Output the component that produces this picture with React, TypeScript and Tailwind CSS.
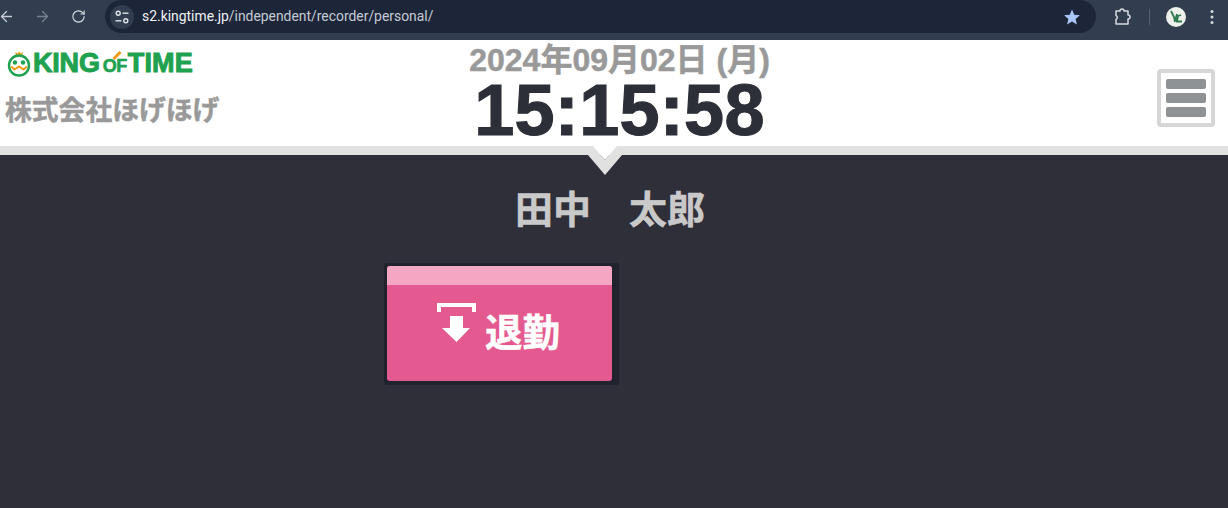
import React from "react";
import { ArrowLeft, ArrowRight, RotateCw } from "lucide-react";

const jp = "font-['Liberation_Sans','Noto_Sans_CJK_JP',sans-serif]";

function Tune() {
  return (
    <svg width="16" height="16" viewBox="0 0 16 16" fill="none" stroke="#dfe3ea" strokeWidth="1.4">
      <circle cx="4.2" cy="4.2" r="2" />
      <path d="M8.5 4.2h6" />
      <path d="M1.5 11.8h6" />
      <circle cx="11.8" cy="11.8" r="2" />
    </svg>
  );
}

function Logo() {
  return (
    <div className="flex items-center h-[27px]">
      <svg width="26" height="26" viewBox="0 0 25 26" className="shrink-0 ml-[1px]">
        <path d="M9 5 V1 L11 2.6 L12.5 .5 L14 2.6 L16 1 V5 Z" fill="#f09a1c" />
        <circle cx="12.5" cy="14.5" r="10" fill="#fff" stroke="#1fa24f" strokeWidth="2.4" />
        <circle cx="8.5" cy="11.5" r="2.2" fill="#1fa24f" />
        <circle cx="16.5" cy="11.5" r="2.2" fill="#1fa24f" />
        <path d="M4.5 15.5 L8 18.500 L12.5 15.500 L17 18.500 L20.500 15.500" fill="none" stroke="#f09a1c" strokeWidth="2" />
      </svg>
      <span className="ml-[1px] font-['Liberation_Sans',sans-serif] font-bold text-[27px] leading-none text-[#1fa24f] [-webkit-text-stroke:1px_#1fa24f] tracking-[-0.2px]">KING</span>
      <span className="ml-[3px] relative font-['Liberation_Sans',sans-serif] font-bold text-[18px] leading-none text-[#1fa24f] [-webkit-text-stroke:0.6px_#1fa24f] mt-[4px] tracking-[-0.5px]">
        <span>OF</span>
        <span className="absolute left-[9px] -top-[3px] h-[3px] w-[10px] bg-[#f09a1c] -rotate-45" />
      </span>
      <span className="ml-[1px] font-['Liberation_Sans',sans-serif] font-bold text-[27px] leading-none text-[#1fa24f] [-webkit-text-stroke:1px_#1fa24f] tracking-[0.2px]">TIME</span>
    </div>
  );
}

export default function App() {
  return (
    <div className="w-[1228px] h-[508px] overflow-hidden flex flex-col bg-[#2f2f39]">
      <div className="h-[40px] shrink-0 bg-[#323e4f] flex items-start text-[#dfe3ea]">
        <div className="h-[33px] w-[105px] shrink-0 flex items-center">
          <ArrowLeft size={17} strokeWidth={1.8} className="-ml-[2px] text-[#c8ced8]" />
          <ArrowRight size={17} strokeWidth={1.8} className="ml-[19px] text-[#77818f]" />
          <RotateCw size={15} strokeWidth={1.8} className="ml-[20px] text-[#d5dae2]" />
        </div>
        <div className="h-[33px] w-[991px] shrink-0 bg-[#1d2638] rounded-full flex items-center pl-[5px] pr-[15px]">
          <div className="w-[24px] h-[24px] rounded-full bg-[#323e4f] flex items-center justify-center">
            <Tune />
          </div>
          <div className="ml-[8px] font-['Roboto',sans-serif] text-[13.9px] leading-none text-[#c3cad5] flex-1">
            <span className="text-[#eef1f5]">s2.kingtime.jp</span>/independent/recorder/personal/
          </div>
          <svg width="18" height="18" viewBox="0 0 24 24" fill="#a8c7fa">
            <path d="M12 2 l3 7 7.500 .6 -5.700 4.900 1.800 7.400 -6.600 -4 -6.600 4 1.800 -7.400 -5.700 -4.900 7.500 -.6z" />
          </svg>
        </div>
        <div className="h-[33px] flex-1 flex items-center">
          <svg width="18" height="18" viewBox="0 0 18 18" fill="none" stroke="#d5dae2" strokeWidth="1.5" className="ml-[17px]">
            <path d="M3 3 H7 A2 2 0 0 1 11 3 H15 V7 A2 2 0 0 1 15 11 V16 H3 V11.500 A2.200 2.200 0 0 0 3 7.500 Z" strokeLinejoin="round" />
          </svg>
          <div className="ml-[18px] w-[1px] h-[16px] bg-[#56606f]" />
          <div className="ml-[16px] w-[20px] h-[20px] rounded-full bg-[#eef0ec] flex items-center justify-center">
            <svg width="15" height="15" viewBox="0 0 15 15" fill="none" stroke="#2f7a4f" strokeWidth="1.8">
              <path d="M2 2l3 6 1 5M6 12l2-7M8 12l1-5 3-1M7 12.500h6" />
            </svg>
          </div>
          <svg width="4" height="16" viewBox="0 0 4 16" fill="#d5dae2" className="ml-[24px]">
            <circle cx="2" cy="2.500" r="1.500" />
            <circle cx="2" cy="8" r="1.500" />
            <circle cx="2" cy="13.500" r="1.500" />
          </svg>
        </div>
      </div>

      <div className="h-[115px] shrink-0 bg-white border-b-[9px] border-[#e1e1e1] flex relative">
        <div className="w-[330px] shrink-0 flex flex-col pl-[5px] pt-[10px]">
          <Logo />
          <div className={`${jp} mt-[15px] text-[26.8px] leading-[38px] font-bold text-[#999999] [-webkit-text-stroke:0.5px_#999999] whitespace-nowrap`}>株式会社ほげほげ</div>
        </div>
        <div className="w-[579px] shrink-0 flex flex-col items-center">
          <div className={`${jp} mt-[1px] text-[32px] leading-[38px] font-bold text-[#999999] [-webkit-text-stroke:0.5px_#999999] whitespace-nowrap`}>2024年09月02日 (月)</div>
          <div className="font-['Liberation_Sans',sans-serif] text-[72px] leading-[64px] -mt-[1px] font-bold tracking-[0.3px] text-[#2d2f38] [-webkit-text-stroke:1.2px_#2d2f38] whitespace-nowrap">15:15:58</div>
        </div>
        <div className="flex-1 flex justify-end items-start pr-[13px] pt-[29px]">
          <div className="w-[58px] h-[58px] border-[4px] border-[#d6d6d6] rounded-[4px] flex flex-col items-center justify-center gap-[4px]">
            <div className="w-[40px] h-[10px] rounded-[2px] bg-[#8e9295]" />
            <div className="w-[40px] h-[10px] rounded-[2px] bg-[#8e9295]" />
            <div className="w-[40px] h-[10px] rounded-[2px] bg-[#8e9295]" />
          </div>
        </div>
        <svg width="36" height="29" viewBox="0 0 36 29" className="absolute left-[587px] top-[106px]">
          <path d="M6 0 L18 14 L30 0 H33 V9 H35 L18 29 L1 9 H3 V0 Z" fill="#e1e1e1" />
          <path d="M6 0 L18 14 L30 0 Z" fill="#ffffff" />
        </svg>
      </div>

      <div className="flex-1 flex flex-col">
        <div className={`${jp} mt-[32px] ml-[515px] text-[38px] leading-[46px] font-bold text-[#c9c9c9] [-webkit-text-stroke:0.5px_#c9c9c9] whitespace-nowrap`}>田中　太郎</div>
        <div className="mt-[30px] ml-[384px] w-[235px] h-[122px] bg-[#20222d] rounded-[3px] pl-[3px] pt-[3px] pr-[7px] pb-[4px]">
          <div className="h-full rounded-[3px] overflow-hidden bg-[#e4598f] flex flex-col">
            <div className="h-[19px] shrink-0 bg-[#f4a6c3]" />
            <div className="flex-1 flex items-start pl-[50px] pt-[18px]">
              <svg width="39" height="40" viewBox="0 0 39 40" className="shrink-0" fill="#fff">
                <path d="M0 0 H39 V9 H35 V4 H4 V9 H0 Z" />
                <path d="M13 13 H26 V25 H33 L19.500 39 L5 25 H13 Z" />
              </svg>
              <div className={`${jp} ml-[9px] mt-[4px] text-[37.5px] leading-[52px] font-bold text-white [-webkit-text-stroke:0.5px_#ffffff] whitespace-nowrap`}>退勤</div>
            </div>
          </div>
        </div>
      </div>
    </div>
  );
}
